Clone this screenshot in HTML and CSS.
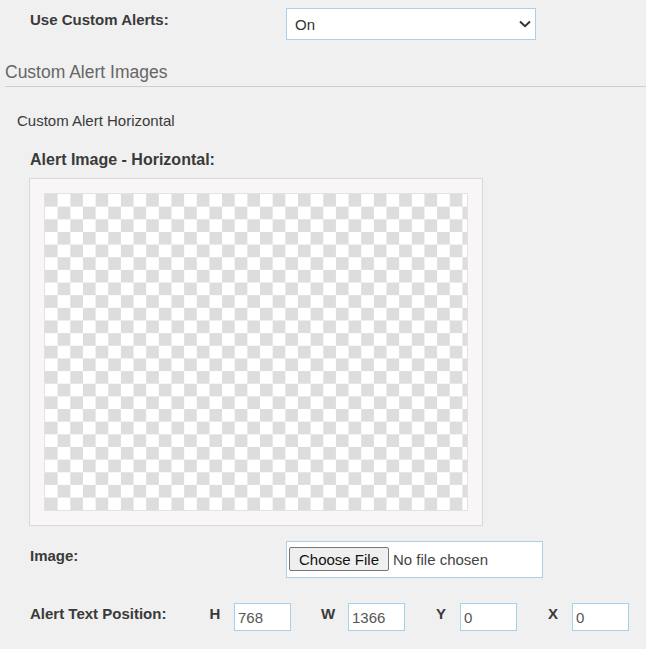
FILE: index.html
```html
<!DOCTYPE html>
<html lang="en">
<head>
    <meta charset="UTF-8">
    <meta name="viewport" content="width=device-width, initial-scale=1.0">
    <title>Custom Alerts</title>
    <link rel="stylesheet" href="styles.css">
</head>
<body>
    <div class="settings">
        <div class="field-row">
            <label class="field-label" for="use-custom-alerts">Use Custom Alerts:</label>
            <div class="select-wrap">
                <select id="use-custom-alerts" class="field-select">
                    <option>On</option>
                    <option>Off</option>
                </select>
                <svg class="select-arrow" width="12" height="8" viewBox="0 0 12 8">
                    <path d="M1 1.5 L6 6.2 L11 1.5" fill="none" stroke="#333" stroke-width="2"/>
                </svg>
            </div>
        </div>

        <h2 class="section-title">Custom Alert Images</h2>

        <div class="subsection">
            <p class="subsection-title">Custom Alert Horizontal</p>

            <h3 class="image-title">Alert Image - Horizontal:</h3>
            <div class="image-frame">
                <div class="image-preview"></div>
            </div>

            <div class="field-row field-row--file">
                <label class="field-label" for="alert-image">Image:</label>
                <input type="file" id="alert-image" class="field-file">
            </div>

            <div class="position-row">
                <span class="field-label">Alert Text Position:</span>
                <div class="position-group">
                    <label for="pos-h">H</label>
                    <input type="text" id="pos-h" class="position-input" value="768">
                </div>
                <div class="position-group position-group--wide">
                    <label for="pos-w">W</label>
                    <input type="text" id="pos-w" class="position-input" value="1366">
                </div>
                <div class="position-group">
                    <label for="pos-y">Y</label>
                    <input type="text" id="pos-y" class="position-input" value="0">
                </div>
                <div class="position-group">
                    <label for="pos-x">X</label>
                    <input type="text" id="pos-x" class="position-input" value="0">
                </div>
            </div>
        </div>
    </div>
</body>
</html>
```

FILE: styles.css
```css
body {
    margin: 0;
    background-color: #f0f0f0;
    font-family: "Liberation Sans", Arial, sans-serif;
    color: #333;
}

.settings {
    padding-top: 8px;
}

.field-row {
    display: flex;
    align-items: flex-start;
    padding-left: 30px;
}

.field-label {
    width: 256px;
    padding-top: 3px;
    font-size: 15px;
    font-weight: bold;
    line-height: 17px;
    color: #3a3a3a;
}

.select-wrap {
    position: relative;
}

.field-select {
    display: block;
    width: 250px;
    height: 32px;
    padding: 0 30px 0 8px;
    box-sizing: border-box;
    border: 1px solid #a9d0e8;
    border-radius: 0;
    background-color: #fff;
    font-family: inherit;
    font-size: 15px;
    color: #333;
    appearance: none;
    -webkit-appearance: none;
    outline: none;
}

.select-arrow {
    position: absolute;
    top: 12px;
    right: 5px;
    pointer-events: none;
}

.section-title {
    margin: 21px 0 0 5px;
    padding-bottom: 3px;
    border-bottom: 1px solid #cfcfcf;
    font-size: 17.5px;
    font-weight: normal;
    line-height: 22px;
    color: #666;
}

.subsection-title {
    margin: 25px 0 0 17px;
    font-size: 15px;
    line-height: 17px;
    color: #3a3a3a;
}

.image-title {
    margin: 22px 0 0 30px;
    font-size: 16px;
    line-height: 18px;
    color: #3a3a3a;
}

.image-frame {
    width: 424px;
    margin: 9px 0 0 29px;
    padding: 14px;
    border: 1px solid #d8d8d8;
    background-color: #f8f6f6;
}

.image-preview {
    height: 316px;
    border: 1px solid #e2e2e2;
    background: repeating-conic-gradient(#fff 0 25%, #dddddd 0 50%) 0 0 / 25.3px 25.3px;
}

.field-row--file {
    margin-top: 15px;
}

.field-row--file .field-label {
    padding-top: 6px;
}

.field-file {
    width: 257px;
    height: 37px;
    padding: 5px 2px;
    box-sizing: border-box;
    border: 1px solid #a9d0e8;
    background-color: #fff;
    font-family: inherit;
    font-size: 15px;
    color: #444;
}

.field-file::file-selector-button {
    width: 100px;
    height: 24px;
    margin-right: 4px;
    padding: 0;
    border: 1px solid #767676;
    border-radius: 2px;
    background-color: #efefef;
    font-family: inherit;
    font-size: 15px;
    color: #111;
}

.position-row {
    display: flex;
    align-items: flex-start;
    gap: 17px;
    margin-top: 25px;
    padding-left: 30px;
}

.position-row .field-label {
    width: 149px;
    padding-top: 2px;
}

.position-group {
    display: flex;
    align-items: flex-start;
}

.position-group label {
    width: 38px;
    padding-top: 2px;
    font-size: 15px;
    font-weight: bold;
    line-height: 17px;
    text-align: center;
    color: #3a3a3a;
}

.position-group--wide label {
    width: 40px;
}

.position-input {
    width: 57px;
    height: 28px;
    padding: 0 3px;
    box-sizing: border-box;
    border: 1px solid #a9d0e8;
    background-color: #fff;
    font-family: inherit;
    font-size: 15px;
    color: #555;
    outline: none;
}
```
